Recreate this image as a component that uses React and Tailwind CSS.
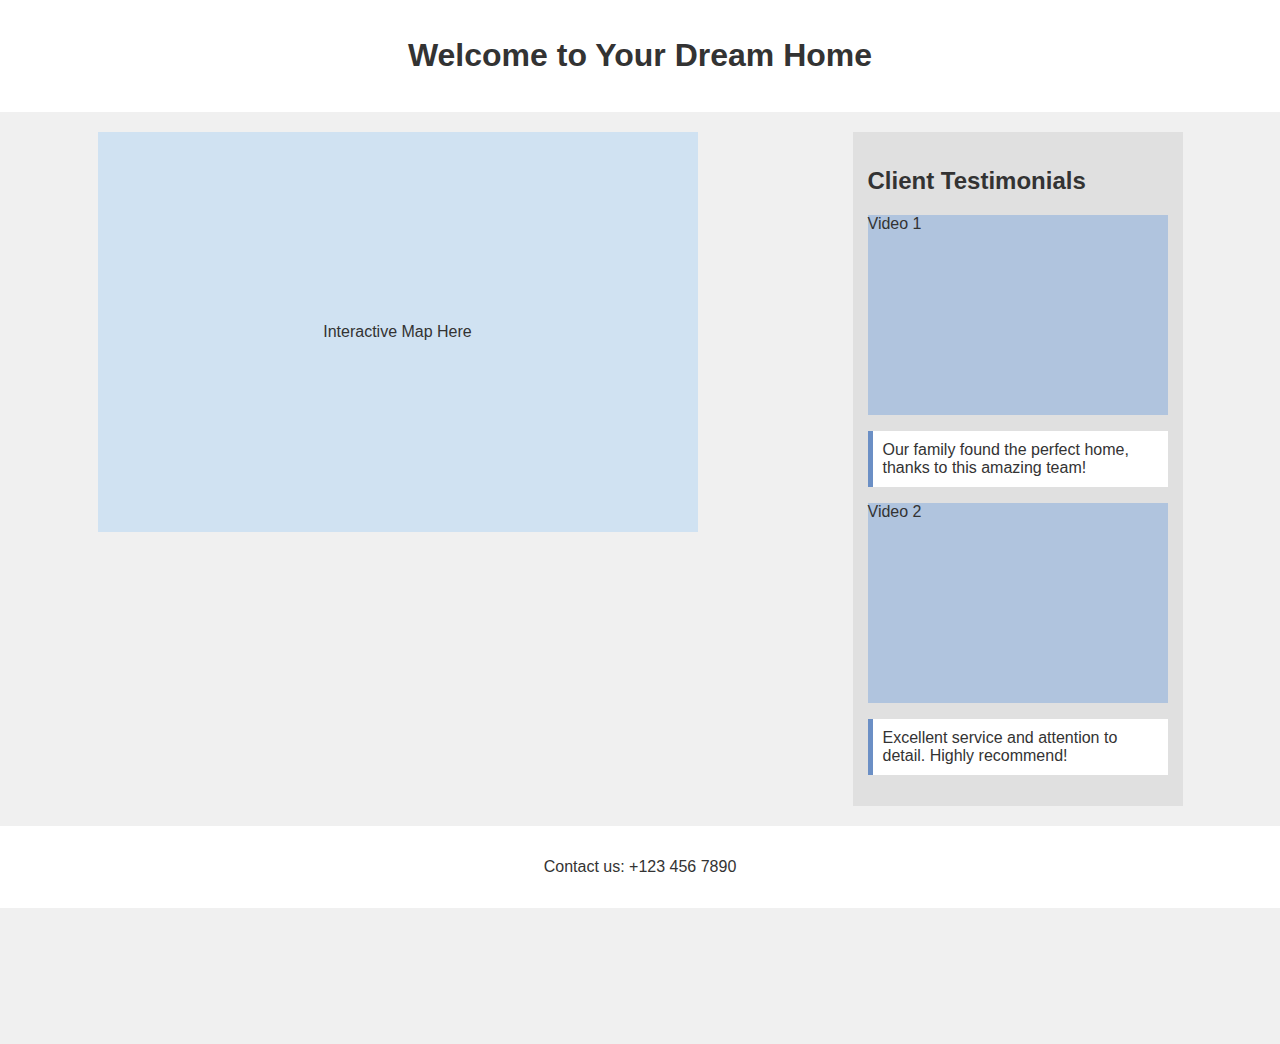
export default function App() {
  const font = { fontFamily: '"Liberation Sans", Arial, sans-serif' };
  const items = [
    { v: "Video 1", t: "Our family found the perfect home, thanks to this amazing team!" },
    { v: "Video 2", t: "Excellent service and attention to detail. Highly recommend!" },
  ];
  return (
    <div className="min-h-[1044px] bg-[#f0f0f0] text-[#333333] text-[16px]" style={font}>
      <header className="h-[112px] bg-white flex items-center justify-center">
        <h1 className="text-[32px] font-bold leading-[37px] -mt-[2px]">Welcome to Your Dream Home</h1>
      </header>
      <main className="flex justify-around items-start p-[20px]">
        <div className="w-[600px] h-[400px] bg-[#d0e2f2] flex items-center justify-center leading-[18px]">
          Interactive Map Here
        </div>
        <aside className="w-[330px] bg-[#e0e0e0] p-[15px]">
          <h2 className="text-[24px] font-bold leading-[28px] my-[20px]">Client Testimonials</h2>
          {items.map((it) => (
            <div key={it.v}>
              <div className="w-[300px] h-[200px] bg-[#b0c4de] leading-[18px]">{it.v}</div>
              <div className="mt-[16px] mb-[16px] bg-white border-l-[5px] border-[#6b8fc5] p-[10px] leading-[18px]">
                {it.t}
              </div>
            </div>
          ))}
        </aside>
      </main>
      <footer className="h-[82px] bg-white flex items-center justify-center leading-[18px]">
        Contact us: +123 456 7890
      </footer>
    </div>
  );
}
